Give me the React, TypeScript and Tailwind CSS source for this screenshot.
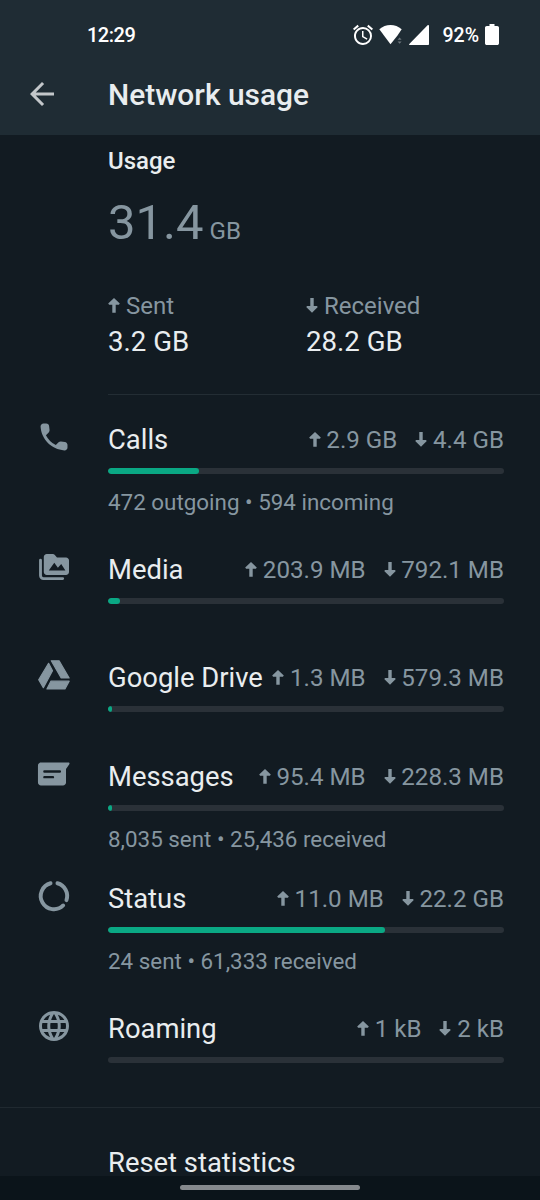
import React from "react";
import { MdAccessAlarm, MdArrowBack, MdLanguage } from "react-icons/md";

type UsageItem = {
    name: string;
    icon: React.ReactNode;
    sent: string;
    received: string;
    bar: number;
    details?: string;
    height: string;
};

const PhoneIcon = () => (
    <svg viewBox="0 0 24 24" className="w-9 h-9" fill="currentColor">
        <path d="M19.23 15.26l-2.54-.29a1.99 1.99 0 0 0-1.64.57l-1.84 1.84a15.045 15.045 0 0 1-6.59-6.59l1.85-1.85c.43-.43.64-1.03.57-1.64l-.29-2.52a2.001 2.001 0 0 0-1.99-1.77H5.03c-1.13 0-2.07.94-2 2.07.53 8.54 7.36 15.36 15.89 15.89 1.13.07 2.07-.87 2.07-2v-1.73c.01-1.01-.75-1.86-1.76-1.98z" />
    </svg>
);

const MediaIcon = () => (
    <svg viewBox="0 0 24 24" className="w-9 h-9" fill="currentColor">
        <path
            fillRule="evenodd"
            d="M7.2 3.3h4.1c.4 0 .8.2 1.1.5l1.6 1.8H20c1.1 0 2 .9 2 2v7.7c0 1.1-.9 2-2 2H7.2c-1.1 0-2-.9-2-2V5.3c0-1.1.9-2 2-2zM8.5 14.3h11.1l-2.8-4.3-2.2 2.5-2.4-3.4z"
        />
        <path
            d="M3 7.5v10.2c0 1.1.9 2 2 2h12.8"
            fill="none"
            stroke="currentColor"
            strokeWidth="1.9"
            strokeLinecap="round"
        />
    </svg>
);

const DriveIcon = () => (
    <svg
        viewBox="0 0 24 24"
        className="w-9 h-9"
        fill="currentColor"
        stroke="currentColor"
        strokeWidth="0.8"
        strokeLinejoin="round"
    >
        <path d="M10.2 2.5h5.2l6.7 11.5h-5.3z" />
        <path d="M10 16.1h12.1l-2.8 5.2H7.3z" />
        <path d="M8.4 4.2l2.6 5L4.9 20.4 1.8 15.2z" />
    </svg>
);

const MessageIcon = () => (
    <svg viewBox="0 0 24 24" className="w-9 h-9" fill="currentColor">
        <path
            fillRule="evenodd"
            d="M3.3 4.3h18.3c.7 0 1 .6.6 1.2L20 8.6v9.1c0 1.1-.9 2-2 2H3.3c-1.1 0-2-.9-2-2V6.3c0-1.1.9-2 2-2zM5.6 9.5a.8.8 0 0 0 0 1.6h10.3a.8.8 0 0 0 0-1.6zM5.6 13.3a.8.8 0 0 0 0 1.6h5.7a.8.8 0 0 0 0-1.6z"
        />
    </svg>
);

const StatusIcon = () => (
    <svg
        viewBox="0 0 24 24"
        className="w-9 h-9"
        fill="none"
        stroke="currentColor"
        strokeWidth="2.6"
        strokeLinecap="round"
    >
        <path d="M14.3 3.5A8.8 8.8 0 0 1 20.3 14.8" />
        <path d="M18.1 18.3A8.8 8.8 0 1 1 9.7 3.5" />
    </svg>
);

const ArrowUp = () => (
    <svg viewBox="0 0 12 15" className="w-3 h-[15px] mb-[2px] shrink-0" fill="currentColor">
        <path d="M6 0l5.8 5.6-.9 1.1H7.7v8H4.3v-8H1.1L.2 5.6z" />
    </svg>
);

const ArrowDown = () => (
    <svg viewBox="0 0 12 15" className="w-3 h-[15px] mb-[2px] shrink-0" fill="currentColor">
        <path d="M6 14.7L.2 9.1l.9-1.1h3.2V0h3.4v8h3.2l.9 1.1z" />
    </svg>
);

const items: UsageItem[] = [
    {
        name: "Calls",
        icon: <PhoneIcon />,
        sent: "2.9 GB",
        received: "4.4 GB",
        bar: 23,
        details: "472 outgoing • 594 incoming",
        height: "h-[130px]",
    },
    {
        name: "Media",
        icon: <MediaIcon />,
        sent: "203.9 MB",
        received: "792.1 MB",
        bar: 3,
        height: "h-[108px]",
    },
    {
        name: "Google Drive",
        icon: <DriveIcon />,
        sent: "1.3 MB",
        received: "579.3 MB",
        bar: 1,
        height: "h-[99px]",
    },
    {
        name: "Messages",
        icon: <MessageIcon />,
        sent: "95.4 MB",
        received: "228.3 MB",
        bar: 1,
        details: "8,035 sent • 25,436 received",
        height: "h-[122px]",
    },
    {
        name: "Status",
        icon: <StatusIcon />,
        sent: "11.0 MB",
        received: "22.2 GB",
        bar: 70,
        details: "24 sent • 61,333 received",
        height: "h-[130px]",
    },
    {
        name: "Roaming",
        icon: <MdLanguage className="w-9 h-9" />,
        sent: "1 kB",
        received: "2 kB",
        bar: 0,
        height: "h-[100px]",
    },
];

const StatusBar = () => (
    <div className="h-[54px] pt-4 pl-[87px] pr-[41px] flex items-center justify-between text-white font-medium">
        <span className="text-[20px] leading-6 tracking-[-0.5px]">12:29</span>
        <div className="flex items-center">
            <MdAccessAlarm className="w-6 h-6" />
            <svg viewBox="0 0 24 20" className="w-6 h-5 ml-[4px]" fill="currentColor">
                <path d="M.3 4.2C3.5 1.5 7.4 0 11.5 0s8 1.5 11.2 4.2L18.5 10.5l-7 8.7z" />
                <path d="M18.6 14.7l2-2.2 2 2.2zM18.6 16.5l2 2.2 2-2.2z" opacity="0.35" />
            </svg>
            <svg viewBox="0 0 20 20" className="w-5 h-5 ml-[6px]" fill="currentColor">
                <path d="M19.2 0c.5 0 .8.3.8.8V19c0 .6-.4 1-1 1H.8c-.6 0-.9-.6-.5-1L18.6.3c.2-.2.4-.3.6-.3z" />
            </svg>
            <span className="text-[19.5px] leading-6 pt-[2px] ml-[13px]">92%</span>
            <svg viewBox="0 0 14 21" className="w-[14px] h-[21px] ml-[6px] mb-[2px]" fill="currentColor">
                <path d="M4.5 0h5v2h2.7c1 0 1.8.8 1.8 1.8v15.4c0 1-.8 1.8-1.8 1.8H1.8C.8 21 0 20.2 0 19.2V3.8C0 2.8.8 2 1.8 2h2.7z" />
            </svg>
        </div>
    </div>
);

const UsageRow = ({ item }: { item: UsageItem }) => (
    <div className={`flex pl-9 pr-9 ${item.height}`}>
        <div className="w-[72px] shrink-0 pt-px text-[#8696a0]">{item.icon}</div>
        <div className="flex-1 pt-1">
            <div className="h-9 flex items-start justify-between whitespace-nowrap">
                <span className="text-[27.4px] leading-9">{item.name}</span>
                <div className="flex gap-[18px] text-[24.15px] leading-[37px] text-[#8696a0]">
                    <span className="flex items-center gap-[5.7px]">
                        <ArrowUp />
                        {item.sent}
                    </span>
                    <span className="flex items-center gap-[5.7px]">
                        <ArrowDown />
                        {item.received}
                    </span>
                </div>
            </div>
            <div className="mt-[10px] h-[6px] rounded-full bg-[#2a3138] overflow-hidden">
                <div className="h-full rounded-full bg-[#0aa884]" style={{ width: `${item.bar}%` }} />
            </div>
            {item.details && (
                <p className="mt-[14px] text-[22.4px] leading-7 text-[#8696a0]">{item.details}</p>
            )}
        </div>
    </div>
);

const App = () => {
    return (
        <div className="w-[540px] h-[1200px] flex flex-col overflow-hidden bg-[#121b22] text-[#e9edef] font-[Roboto,sans-serif]">
            <header className="h-[135px] shrink-0 bg-[#1f2c34]">
                <StatusBar />
                <div className="h-[81px] pl-6 flex items-center">
                    <MdArrowBack className="w-9 h-9 -mt-[2px] text-[#c3c7ca]" />
                    <h1 className="ml-12 text-[29.9px] leading-9 font-medium">Network usage</h1>
                </div>
            </header>

            <main className="h-[1041px] shrink-0">
                <section className="ml-[108px] pt-3 h-[260px] border-b border-[#232d34]">
                    <h2 className="text-[24px] leading-7 font-medium">Usage</h2>
                    <div className="mt-5 flex items-baseline gap-[6px] leading-[56px] text-[#8696a0]">
                        <span className="text-[49px]">31.4</span>
                        <span className="text-[24.15px]">GB</span>
                    </div>
                    <div className="mt-[33px] mr-9 grid grid-cols-2">
                        <div>
                            <div className="flex items-center gap-[6px] text-[24px] leading-7 text-[#8696a0]">
                                <ArrowUp />
                                Sent
                            </div>
                            <div className="mt-1 text-[27.6px] leading-9">3.2 GB</div>
                        </div>
                        <div>
                            <div className="flex items-center gap-[6px] text-[24px] leading-7 text-[#8696a0]">
                                <ArrowDown />
                                Received
                            </div>
                            <div className="mt-1 text-[27.6px] leading-9">28.2 GB</div>
                        </div>
                    </div>
                </section>

                <section className="pt-[23px] border-b border-[#202930]">
                    {items.map((item) => (
                        <UsageRow key={item.name} item={item} />
                    ))}
                </section>

                <button className="block ml-[108px] mt-[42px] text-[27.4px] leading-[27px]">Reset statistics</button>
            </main>

            <div className="h-6 shrink-0 bg-[#0b141a] flex justify-center pt-[9px]">
                <div className="w-[180px] h-[5px] rounded-full bg-[#85898d]" />
            </div>
        </div>
    );
};

export default App;
